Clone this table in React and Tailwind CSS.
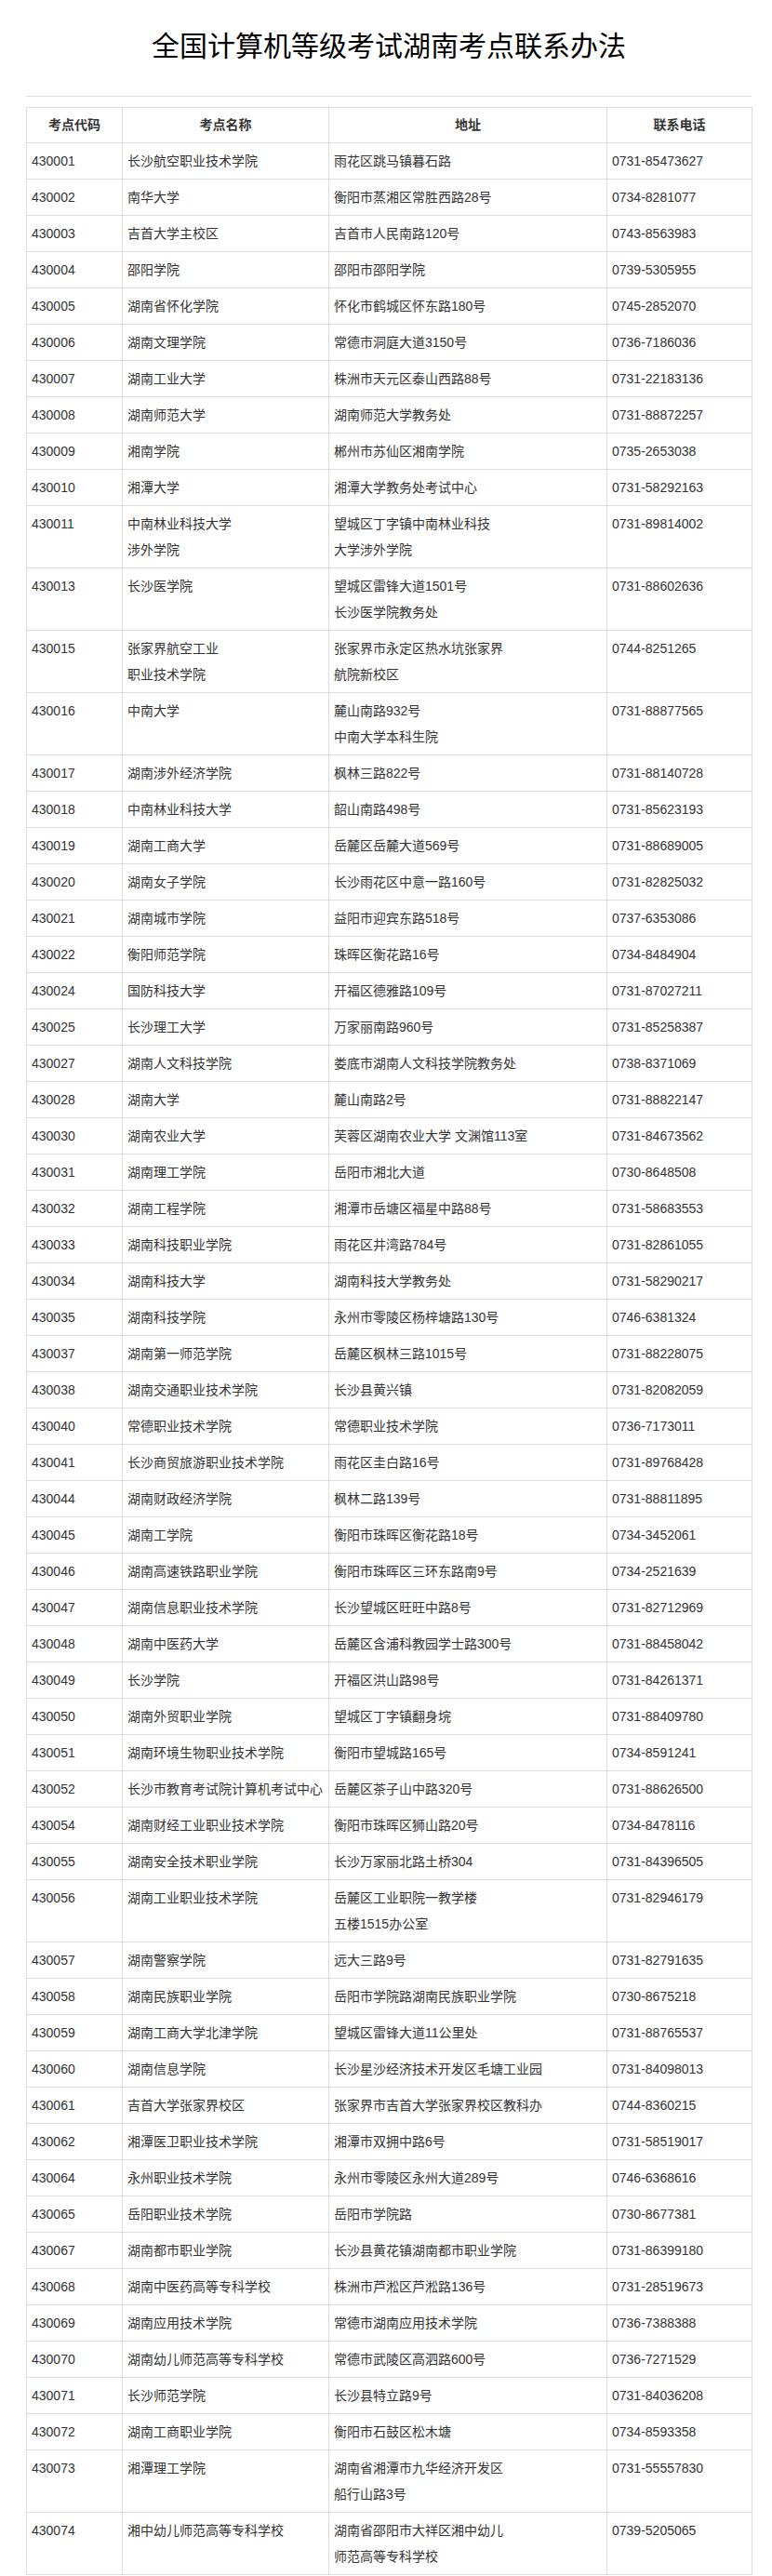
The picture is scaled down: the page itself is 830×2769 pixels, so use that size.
import React from 'react';

// 考点列表：多行单元格用 "\n" 分隔
const rows = [
  ['430001', '长沙航空职业技术学院', '雨花区跳马镇暮石路', '0731-85473627'],
  ['430002', '南华大学', '衡阳市蒸湘区常胜西路28号', '0734-8281077'],
  ['430003', '吉首大学主校区', '吉首市人民南路120号', '0743-8563983'],
  ['430004', '邵阳学院', '邵阳市邵阳学院', '0739-5305955'],
  ['430005', '湖南省怀化学院', '怀化市鹤城区怀东路180号', '0745-2852070'],
  ['430006', '湖南文理学院', '常德市洞庭大道3150号', '0736-7186036'],
  ['430007', '湖南工业大学', '株洲市天元区泰山西路88号', '0731-22183136'],
  ['430008', '湖南师范大学', '湖南师范大学教务处', '0731-88872257'],
  ['430009', '湘南学院', '郴州市苏仙区湘南学院', '0735-2653038'],
  ['430010', '湘潭大学', '湘潭大学教务处考试中心', '0731-58292163'],
  ['430011', '中南林业科技大学\n涉外学院', '望城区丁字镇中南林业科技\n大学涉外学院', '0731-89814002'],
  ['430013', '长沙医学院', '望城区雷锋大道1501号\n长沙医学院教务处', '0731-88602636'],
  ['430015', '张家界航空工业\n职业技术学院', '张家界市永定区热水坑张家界\n航院新校区', '0744-8251265'],
  ['430016', '中南大学', '麓山南路932号\n中南大学本科生院', '0731-88877565'],
  ['430017', '湖南涉外经济学院', '枫林三路822号', '0731-88140728'],
  ['430018', '中南林业科技大学', '韶山南路498号', '0731-85623193'],
  ['430019', '湖南工商大学', '岳麓区岳麓大道569号', '0731-88689005'],
  ['430020', '湖南女子学院', '长沙雨花区中意一路160号', '0731-82825032'],
  ['430021', '湖南城市学院', '益阳市迎宾东路518号', '0737-6353086'],
  ['430022', '衡阳师范学院', '珠晖区衡花路16号', '0734-8484904'],
  ['430024', '国防科技大学', '开福区德雅路109号', '0731-87027211'],
  ['430025', '长沙理工大学', '万家丽南路960号', '0731-85258387'],
  ['430027', '湖南人文科技学院', '娄底市湖南人文科技学院教务处', '0738-8371069'],
  ['430028', '湖南大学', '麓山南路2号', '0731-88822147'],
  ['430030', '湖南农业大学', '芙蓉区湖南农业大学 文渊馆113室', '0731-84673562'],
  ['430031', '湖南理工学院', '岳阳市湘北大道', '0730-8648508'],
  ['430032', '湖南工程学院', '湘潭市岳塘区福星中路88号', '0731-58683553'],
  ['430033', '湖南科技职业学院', '雨花区井湾路784号', '0731-82861055'],
  ['430034', '湖南科技大学', '湖南科技大学教务处', '0731-58290217'],
  ['430035', '湖南科技学院', '永州市零陵区杨梓塘路130号', '0746-6381324'],
  ['430037', '湖南第一师范学院', '岳麓区枫林三路1015号', '0731-88228075'],
  ['430038', '湖南交通职业技术学院', '长沙县黄兴镇', '0731-82082059'],
  ['430040', '常德职业技术学院', '常德职业技术学院', '0736-7173011'],
  ['430041', '长沙商贸旅游职业技术学院', '雨花区圭白路16号', '0731-89768428'],
  ['430044', '湖南财政经济学院', '枫林二路139号', '0731-88811895'],
  ['430045', '湖南工学院', '衡阳市珠晖区衡花路18号', '0734-3452061'],
  ['430046', '湖南高速铁路职业学院', '衡阳市珠晖区三环东路南9号', '0734-2521639'],
  ['430047', '湖南信息职业技术学院', '长沙望城区旺旺中路8号', '0731-82712969'],
  ['430048', '湖南中医药大学', '岳麓区含浦科教园学士路300号', '0731-88458042'],
  ['430049', '长沙学院', '开福区洪山路98号', '0731-84261371'],
  ['430050', '湖南外贸职业学院', '望城区丁字镇翻身垸', '0731-88409780'],
  ['430051', '湖南环境生物职业技术学院', '衡阳市望城路165号', '0734-8591241'],
  ['430052', '长沙市教育考试院计算机考试中心', '岳麓区茶子山中路320号', '0731-88626500'],
  ['430054', '湖南财经工业职业技术学院', '衡阳市珠晖区狮山路20号', '0734-8478116'],
  ['430055', '湖南安全技术职业学院', '长沙万家丽北路土桥304', '0731-84396505'],
  ['430056', '湖南工业职业技术学院', '岳麓区工业职院一教学楼\n五楼1515办公室', '0731-82946179'],
  ['430057', '湖南警察学院', '远大三路9号', '0731-82791635'],
  ['430058', '湖南民族职业学院', '岳阳市学院路湖南民族职业学院', '0730-8675218'],
  ['430059', '湖南工商大学北津学院', '望城区雷锋大道11公里处', '0731-88765537'],
  ['430060', '湖南信息学院', '长沙星沙经济技术开发区毛塘工业园', '0731-84098013'],
  ['430061', '吉首大学张家界校区', '张家界市吉首大学张家界校区教科办', '0744-8360215'],
  ['430062', '湘潭医卫职业技术学院', '湘潭市双拥中路6号', '0731-58519017'],
  ['430064', '永州职业技术学院', '永州市零陵区永州大道289号', '0746-6368616'],
  ['430065', '岳阳职业技术学院', '岳阳市学院路', '0730-8677381'],
  ['430067', '湖南都市职业学院', '长沙县黄花镇湖南都市职业学院', '0731-86399180'],
  ['430068', '湖南中医药高等专科学校', '株洲市芦淞区芦淞路136号', '0731-28519673'],
  ['430069', '湖南应用技术学院', '常德市湖南应用技术学院', '0736-7388388'],
  ['430070', '湖南幼儿师范高等专科学校', '常德市武陵区高泗路600号', '0736-7271529'],
  ['430071', '长沙师范学院', '长沙县特立路9号', '0731-84036208'],
  ['430072', '湖南工商职业学院', '衡阳市石鼓区松木塘', '0734-8593358'],
  ['430073', '湘潭理工学院', '湖南省湘潭市九华经济开发区\n船行山路3号', '0731-55557830'],
  ['430074', '湘中幼儿师范高等专科学校', '湖南省邵阳市大祥区湘中幼儿\n师范高等专科学校', '0739-5205065'],
];

const headers = ['考点代码', '考点名称', '地址', '联系电话'];

function Cell({ text }) {
  const lines = text.split('\n');
  return (
    <td className="border border-[#dddddd] px-[5px] py-[5px] align-top leading-[28px] whitespace-nowrap">
      {lines.map((line, i) => (
        <div key={i}>{line}</div>
      ))}
    </td>
  );
}

export default function App() {
  return (
    <div
      className="bg-white text-[#333333] w-[830px]"
      style={{ fontFamily: '"Liberation Sans", "Noto Sans CJK SC", sans-serif' }}
    >
      <div className="ml-[28px] w-[780px]">
        <h1 className="pt-[30px] text-center text-[30px] leading-[40px] font-normal text-black">
          全国计算机等级考试湖南考点联系办法
        </h1>
        <div className="mt-[33px] h-px bg-[#dddddd]" />
        <table className="mt-[11px] w-[780px] table-fixed border-collapse text-[14px]">
          <colgroup>
            <col className="w-[103px]" />
            <col className="w-[222px]" />
            <col className="w-[299px]" />
            <col className="w-[156px]" />
          </colgroup>
          <thead>
            <tr>
              {headers.map((h) => (
                <th
                  key={h}
                  className="border border-[#dddddd] py-[5px] text-center font-bold leading-[27px] text-[#333333]"
                >
                  {h}
                </th>
              ))}
            </tr>
          </thead>
          <tbody>
            {rows.map((r) => (
              <tr key={r[0]}>
                {r.map((c, i) => (
                  <Cell key={i} text={c} />
                ))}
              </tr>
            ))}
          </tbody>
        </table>
      </div>
    </div>
  );
}
